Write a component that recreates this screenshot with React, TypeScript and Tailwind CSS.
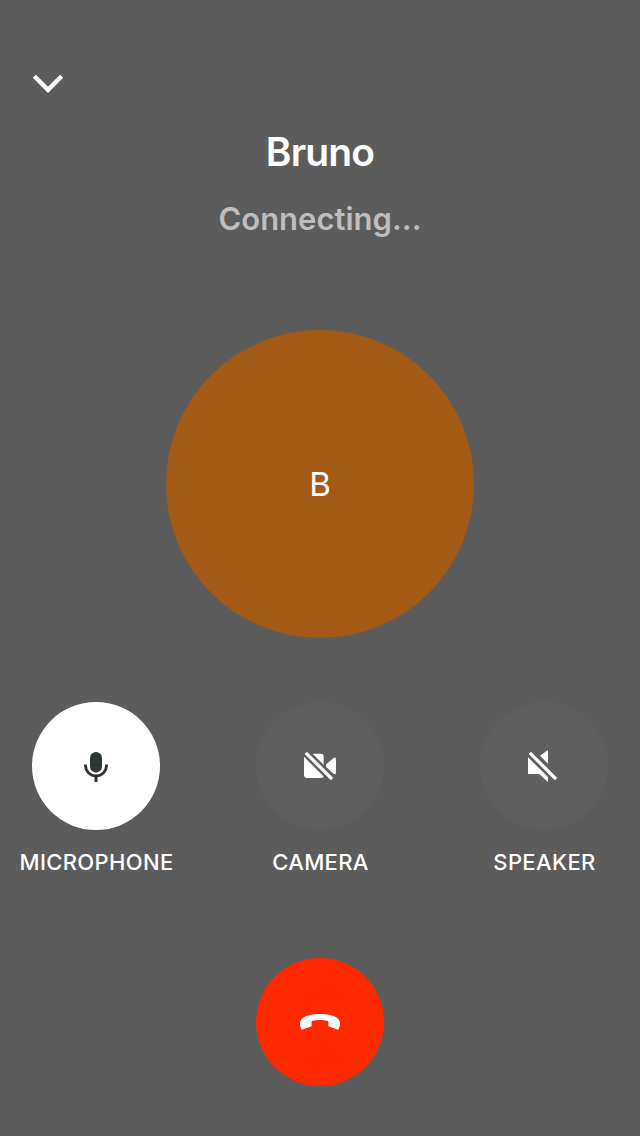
import type { ReactNode } from "react";

function MicIcon() {
  return (
    <svg width="48" height="48" viewBox="0 0 48 48" fill="none">
      <rect x="18" y="10" width="12" height="20.4" rx="6" fill="#2f3437" />
      <path d="M13.4 22.6c0 6.8 4.8 11.4 10.6 11.4s10.6-4.6 10.6-11.4" stroke="#2f3437" strokeWidth="2.8" />
      <path d="M24 33v7" stroke="#2f3437" strokeWidth="3" />
    </svg>
  );
}

function CameraOffIcon() {
  return (
    <svg width="48" height="48" viewBox="0 0 48 48" fill="#fff">
      <path d="M16.6 11.7H24.6Q27.7 11.7 27.7 14.8V22.8Z" />
      <path d="M8 14.8L27.7 34.5Q26.7 36 24.6 36H11.2Q8 36 8 32.8Z" />
      <path d="M30 22.6L37.1 16.2Q40 14.3 40 17V30.8Q40 33.4 37.1 31.6L30 24.8Z" />
      <path d="M9.8 10.8L36 37" stroke="#fff" strokeWidth="3.2" />
    </svg>
  );
}

function SpeakerOffIcon() {
  return (
    <svg width="48" height="48" viewBox="0 0 48 48" fill="#fff">
      <path d="M20 13.8L28 8V21.8Z" />
      <path d="M8 15.2L28 35V40L19.2 32H8Z" />
      <path d="M9.8 10.8L36 37" stroke="#fff" strokeWidth="3.2" />
    </svg>
  );
}

function HangUpIcon() {
  return (
    <svg width="48" height="48" viewBox="0 0 48 48" fill="#fff">
      <path d="M4 25.4C4 19 13 16 24 16S44 19 44 25.4C44 27.6 43.2 30.2 42.2 31.8L32.4 28.3V23Q24 20.8 15.6 23V28.3L5.8 31.8C4.8 30.2 4 27.6 4 25.4Z" />
    </svg>
  );
}

function CallControl({ label, active = false, children }: { label: string; active?: boolean; children: ReactNode }) {
  return (
    <div className="flex w-32 flex-col items-center">
      <button
        aria-label={label}
        className={`flex size-32 items-center justify-center rounded-full ${active ? "bg-white" : "bg-[#5f5f5f]"}`}
      >
        {children}
      </button>
      <span className="mt-4 pl-px text-[22px] leading-8 font-medium tracking-[0.35px] whitespace-nowrap">{label}</span>
    </div>
  );
}

export default function App() {
  return (
    <main className="flex h-[1136px] w-[640px] flex-col items-center bg-[#5c5c5c] font-['Inter',sans-serif] text-white">
      <header className="flex h-32 w-full items-end px-6 pb-5">
        <button aria-label="Minimize">
          <svg width="48" height="48" viewBox="0 0 48 48" fill="none">
            <path d="M10.4 16.3L24 29.9L37.6 16.3" stroke="#fff" strokeWidth="4.4" />
          </svg>
        </button>
      </header>
      <h1 className="h-12 text-[39px] leading-[47px] font-semibold tracking-[-0.85px]">Bruno</h1>
      <p className="mt-6 h-10 text-[31px] leading-[37px] font-semibold text-[#bebebe]">Connecting...</p>
      <div className="mt-[90px] flex size-[308px] items-center justify-center rounded-full bg-[#a25a16] text-[33px] leading-10">
        B
      </div>
      <section className="mt-16 flex w-full justify-between px-8">
        <CallControl label="MICROPHONE" active>
          <MicIcon />
        </CallControl>
        <CallControl label="CAMERA">
          <CameraOffIcon />
        </CallControl>
        <CallControl label="SPEAKER">
          <SpeakerOffIcon />
        </CallControl>
      </section>
      <button aria-label="End call" className="mt-20 flex size-32 items-center justify-center rounded-full bg-[#ff2900]">
        <HangUpIcon />
      </button>
    </main>
  );
}
